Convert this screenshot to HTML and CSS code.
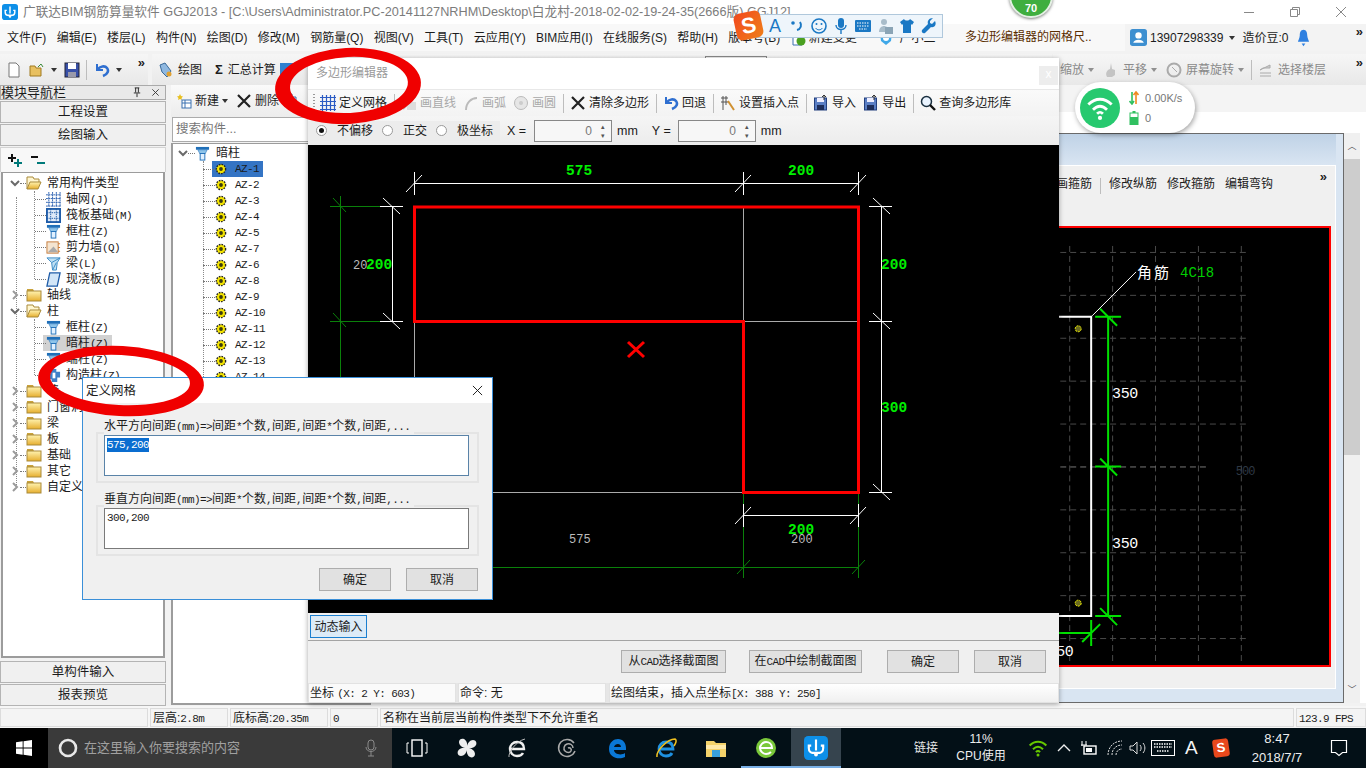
FILE: index.html
```html
<!DOCTYPE html>
<html lang="zh-CN">
<head>
<meta charset="utf-8">
<title>广联达BIM钢筋算量软件 GGJ2013</title>
<link rel="stylesheet" href="styles.css">
</head>
<body>
<svg class="defs" aria-hidden="true">
  <defs>
    <linearGradient id="fy" x1="0" y1="0" x2="0" y2="1"><stop offset="0" stop-color="#fff3b0"/><stop offset="1" stop-color="#e6ae2e"/></linearGradient>
    <symbol id="chev-r" viewBox="0 0 10 10"><path d="M3 1l4 4-4 4" fill="none" stroke="#9a9a9a" stroke-width="2"/></symbol>
    <symbol id="chev-d" viewBox="0 0 10 10"><path d="M1 3l4 4 4-4" fill="none" stroke="#6a6a6a" stroke-width="2"/></symbol>
    <symbol id="folder" viewBox="0 0 16 14"><path d="M1 3V1h6l1 2z" fill="#c9a23c"/><rect x="1" y="3" width="14" height="10" fill="url(#fy)" stroke="#a98a3a"/></symbol>
    <symbol id="folder-o" viewBox="0 0 16 14"><path d="M1 13V1h6l1 2h5v3" fill="#fff6d0" stroke="#a98a3a"/><path d="M1 13l3-7h11l-3 7z" fill="url(#fy)" stroke="#a98a3a"/></symbol>
    <symbol id="pillar" viewBox="0 0 16 16"><path d="M1 1h14v3H1z" fill="#1f6fb8"/><path d="M3 4h10l-2 4H5z" fill="#8ec4ea" stroke="#1f6fb8" stroke-width=".6"/><rect x="5.5" y="8" width="5" height="7" fill="#e0f0ff" stroke="#1f6fb8"/></symbol>
    <symbol id="gear" viewBox="0 0 12 12"><circle cx="6" cy="6" r="4.6" fill="#f6e600" stroke="#222" stroke-width="1.4" stroke-dasharray="1.6 1.1"/><circle cx="6" cy="6" r="1.9" fill="#3a3a10"/></symbol>
    <symbol id="grid" viewBox="0 0 16 16"><path d="M3 0v16M7 0v16M11 0v16M15 0v16M0 3h16M0 7h16M0 11h16M0 15h16" stroke="#2a5fb0" fill="none" stroke-dasharray="2 .6"/></symbol>
    <symbol id="raft" viewBox="0 0 16 16"><rect x="1" y="1" width="14" height="14" fill="#dfeaf8" stroke="#1f5ca8" stroke-width="2"/><path d="M5 1v14M11 1v14M1 5h14M1 11h14" stroke="#1f5ca8" stroke-dasharray="1.5 1"/></symbol>
    <symbol id="wall" viewBox="0 0 16 16"><rect x="1" y="2" width="12" height="12" fill="#f4e4d0" stroke="#c47a3a"/><path d="M2 13l6-6 5 6z" fill="#aaa"/><path d="M13 4h2M13 8h2M13 12h2" stroke="#d0762a"/></symbol>
    <symbol id="beam" viewBox="0 0 16 16"><path d="M1 2h14l-3 5-1 8H7L6 7z" fill="#bfe0f4" stroke="#3a8ac4"/><path d="M6 7l9-5M7 15l4-8" stroke="#3a8ac4" fill="none"/></symbol>
    <symbol id="slab" viewBox="0 0 16 16"><path d="M4 1h11l-3 14H1z" fill="#d2e6f8" stroke="#1f5ca8" stroke-width="1.4"/></symbol>
    <symbol id="struct" viewBox="0 0 16 16"><path d="M5 1h6v3h4v6h-3v5H6v-3H1V6h4z" fill="#3f80c8"/><path d="M7 5h3v6H7z" fill="#fff"/></symbol>
    <symbol id="dgrid" viewBox="0 0 16 16"><path d="M2.5 0v16M6.5 0v16M10.5 0v16M14.5 0v16M0 2.5h16M0 6.5h16M0 10.5h16M0 14.5h16" stroke="#2c5cc4" stroke-width="1.2" fill="none"/></symbol>
    <symbol id="undo" viewBox="0 0 16 16"><path d="M3 2v6h6" fill="none" stroke="#2f6fd0" stroke-width="2"/><path d="M3.5 7.5C6 4 11 3.500 13 6s1 6-4 8" fill="none" stroke="#2f6fd0" stroke-width="2.600"/></symbol>
    <symbol id="cross" viewBox="0 0 16 16"><path d="M2 2l12 12M14 2L2 14" stroke="#222" stroke-width="2.200"/></symbol>
    <symbol id="floppy" viewBox="0 0 16 16"><rect x="1.500" y="3" width="12" height="12" fill="#5a7ec4" stroke="#24407e"/><rect x="4" y="3" width="7" height="4" fill="#eef"/><rect x="4" y="10" width="7" height="5" fill="#1e2e5a"/><path d="M11 0v5M9 2l2-2 2 2" stroke="#333" fill="none"/></symbol>
    <symbol id="lens" viewBox="0 0 16 16"><circle cx="6.500" cy="6.500" r="5" fill="#eaf4ff" stroke="#1a3040" stroke-width="1.500"/><path d="M10 10l5 5" stroke="#111" stroke-width="2.400"/></symbol>
    <symbol id="tri" viewBox="0 0 6 4"><path d="M0 0h6L3 4z" fill="#333"/></symbol>
    <symbol id="wifi" viewBox="0 0 24 24"><path d="M2 9c6-6 14-6 20 0M6 13.500c4-4 8-4 12 0M9.500 17c2-2 3-2 5 0" fill="none" stroke="currentColor" stroke-width="2.400"/><circle cx="12" cy="20.500" r="1.800" fill="currentColor"/></symbol>
    <symbol id="app" viewBox="0 0 20 20"><rect width="20" height="20" rx="3.500" fill="#0d8fe8"/><path d="M10 3v9M6 8H4v2c0 3 2 4 3 4h6c1 0 3-1 3-4V8h-2" fill="none" stroke="#fff" stroke-width="1.800"/><circle cx="10" cy="15.500" r="1.600" fill="#fff"/></symbol>
  </defs>
</svg>

<div class="app">
  <header class="titlebar">
    <svg class="app-ico"><use href="#app"/></svg>
    <span class="title-text">广联达BIM钢筋算量软件 GGJ2013 - [C:\Users\Administrator.PC-20141127NRHM\Desktop\白龙村-2018-02-02-19-24-35(2666版).GGJ12]</span>
    <div class="winctl">
      <svg class="wc" viewBox="0 0 12 12"><path d="M1 6.500h10" stroke="#888"/></svg>
      <svg class="wc" viewBox="0 0 12 12"><path d="M1.500 3.500h7v7h-7zM3.500 3.500v-2h7v7h-2" fill="none" stroke="#888"/></svg>
      <svg class="wc" viewBox="0 0 12 12"><path d="M1 1l10 10M11 1L1 11" stroke="#888"/></svg>
    </div>
  </header>

  <nav class="menubar">
    <span>文件(F)</span><span>编辑(E)</span><span>楼层(L)</span><span>构件(N)</span><span>绘图(D)</span><span>修改(M)</span><span>钢筋量(Q)</span><span>视图(V)</span><span>工具(T)</span><span>云应用(Y)</span><span>BIM应用(I)</span><span>在线服务(S)</span><span>帮助(H)</span><span>版本号(B)</span>
    <svg class="m-ico" viewBox="0 0 16 16"><path d="M2 1h9v14H2z" fill="#fff" stroke="#3a70b0"/><circle cx="10" cy="11" r="4.500" fill="#4aa020"/></svg><span class="m-new">新建变更</span>
    <svg class="m-ico m-ico2" viewBox="0 0 16 16"><path d="M2 3h12l-1 8-5 4-5-4z" fill="#40a8e8"/><circle cx="8" cy="8" r="3" fill="#fff"/></svg><span class="m-guang">广小二</span>
    <span class="m-hint">多边形编辑器的网格尺..</span>
    <div class="userbox">
      <svg class="u-ico" viewBox="0 0 16 16"><rect width="16" height="16" rx="2.500" fill="#3d8fd0"/><circle cx="8" cy="6" r="3" fill="#fff"/><path d="M3 13c1-4 9-4 10 0z" fill="#fff"/></svg>
      <span class="u-phone">13907298339</span><svg class="tri"><use href="#tri"/></svg>
      <span class="u-bean">造价豆:0</span>
      <svg class="u-bell" viewBox="0 0 14 20"><path d="M7 1c3 0 4 3 4 6 0 3 2 6 2 7H1c0-1 2-4 2-7 0-3 1-6 4-6z" fill="#2f80e0"/><path d="M5 16h4l-2 3z" fill="#2f80e0"/></svg>
      <span class="chevs">»</span>
    </div>
  </nav>

  <div class="toolbar">
    <div class="tb-seg tb-quick">
      <svg class="ti" viewBox="0 0 16 16"><path d="M3 1h7l3 3v11H3z" fill="#fff" stroke="#777"/></svg>
      <svg class="ti" viewBox="0 0 16 16"><path d="M1 14V4h5l1 2h5v8z" fill="#e8c060" stroke="#a07a20"/><path d="M9 5l3-3 2 3" fill="none" stroke="#3a8a3a"/></svg>
      <svg class="tri"><use href="#tri"/></svg>
      <svg class="ti" viewBox="0 0 16 16"><rect x="1" y="1" width="14" height="14" fill="#3850a8" stroke="#223"/><rect x="4" y="1" width="8" height="6" fill="#fff"/><rect x="4" y="10" width="8" height="5" fill="#99a"/></svg>
      <i class="vsep"></i>
      <svg class="ti"><use href="#undo"/></svg>
      <svg class="tri"><use href="#tri"/></svg>
      <span class="chevs tb-more">»</span>
    </div>
    <div class="tb-seg tb-main">
      <svg class="ti" viewBox="0 0 16 16"><path d="M2 3l5-2 6 8-4 6-5-5z" fill="#8fb8e0" stroke="#3a6a9a"/><circle cx="11" cy="12" r="2.500" fill="#e0a030"/></svg><span>绘图</span>
      <b class="sigma">Σ</b><span>汇总计算</span>
      <svg class="ti" viewBox="0 0 16 16"><rect x="1" y="1" width="14" height="14" fill="#2f80d0"/><path d="M3 13L13 3v10z" fill="#e8f2fc"/></svg>
      <i class="tb-box"></i>
    </div>
    <div class="tb-seg tb-view">
      <span>缩放</span><svg class="tri tri-g"><use href="#tri"/></svg>
      <svg class="ti" viewBox="0 0 16 16"><path d="M4 15c-2-4 0-7 3-8l1-6 1 6 3 1v5l-3 2z" fill="#c4c4c4"/></svg><span>平移</span><svg class="tri tri-g"><use href="#tri"/></svg>
      <svg class="ti" viewBox="0 0 16 16"><circle cx="8" cy="8" r="6.500" fill="none" stroke="#aaa" stroke-width="2"/><path d="M6 5l5 5" stroke="#aaa"/></svg><span>屏幕旋转</span><svg class="tri tri-g"><use href="#tri"/></svg>
      <i class="vsep"></i>
      <svg class="ti" viewBox="0 0 16 16"><path d="M2 8l10-5v3H5zM2 11h11M2 14h11" stroke="#aaa" fill="#ccc"/></svg><span>选择楼层</span>
      <span class="chevs tb-end">»</span>
    </div>
  </div>

  <main class="body">
    <aside class="nav">
      <div class="nav-head"><span class="nav-title">模块导航栏</span><svg class="nav-pin" viewBox="0 0 10 12"><path d="M2.500 1h5M3.500 1v5M6.500 1v5M1.500 6.500h7M5 7v4" fill="none" stroke="#222"/></svg><svg class="nav-x" viewBox="0 0 10 10"><path d="M1.500 1.500l7 7M8.500 1.500l-7 7" stroke="#333"/></svg></div>
      <button class="navbtn">工程设置</button>
      <button class="navbtn">绘图输入</button>
      <div class="nav-exp">
        <svg class="ex" viewBox="0 0 16 14"><path d="M5 1v8M1 5h8" stroke="#111" stroke-width="2"/><path d="M11 6v8M7 10h8" stroke="#007a7a" stroke-width="2"/></svg>
        <svg class="ex" viewBox="0 0 16 14"><path d="M1 4h7" stroke="#111" stroke-width="2"/><path d="M7 10h8" stroke="#007a7a" stroke-width="2"/></svg>
      </div>
      <div class="treebox">
        <div class="tree">
          <div class="n0"><svg class="chv"><use href="#chev-d"/></svg><i class="dot d0"></i><svg class="fo"><use href="#folder-o"/></svg><span>常用构件类型</span></div>
          <div class="kids">
            <div class="n1"><i class="dot"></i><svg class="ic"><use href="#grid"/></svg><span>轴网<span class="sim">(J)</span></span></div>
            <div class="n1"><i class="dot"></i><svg class="ic"><use href="#raft"/></svg><span>筏板基础<span class="sim">(M)</span></span></div>
            <div class="n1"><i class="dot"></i><svg class="ic"><use href="#pillar"/></svg><span>框柱<span class="sim">(Z)</span></span></div>
            <div class="n1"><i class="dot"></i><svg class="ic"><use href="#wall"/></svg><span>剪力墙<span class="sim">(Q)</span></span></div>
            <div class="n1"><i class="dot"></i><svg class="ic"><use href="#beam"/></svg><span>梁<span class="sim">(L)</span></span></div>
            <div class="n1"><i class="dot"></i><svg class="ic"><use href="#slab"/></svg><span>现浇板<span class="sim">(B)</span></span></div>
          </div>
          <div class="n0"><svg class="chv"><use href="#chev-r"/></svg><i class="dot d0"></i><svg class="fo"><use href="#folder"/></svg><span>轴线</span></div>
          <div class="n0"><svg class="chv"><use href="#chev-d"/></svg><i class="dot d0"></i><svg class="fo"><use href="#folder-o"/></svg><span>柱</span></div>
          <div class="kids kids-s">
            <div class="n1"><i class="dot"></i><svg class="ic"><use href="#pillar"/></svg><span>框柱<span class="sim">(Z)</span></span></div>
            <div class="n1 hl"><i class="dot"></i><svg class="ic"><use href="#pillar"/></svg><span>暗柱<span class="sim">(Z)</span></span></div>
            <div class="n1"><i class="dot"></i><svg class="ic"><use href="#pillar"/></svg><span>端柱<span class="sim">(Z)</span></span></div>
            <div class="n1"><i class="dot"></i><svg class="ic"><use href="#struct"/></svg><span>构造柱<span class="sim">(Z)</span></span></div>
          </div>
          <div class="n0"><svg class="chv"><use href="#chev-r"/></svg><i class="dot d0"></i><svg class="fo"><use href="#folder"/></svg><span>墙</span></div>
          <div class="n0"><svg class="chv"><use href="#chev-r"/></svg><i class="dot d0"></i><svg class="fo"><use href="#folder"/></svg><span>门窗洞</span></div>
          <div class="n0"><svg class="chv"><use href="#chev-r"/></svg><i class="dot d0"></i><svg class="fo"><use href="#folder"/></svg><span>梁</span></div>
          <div class="n0"><svg class="chv"><use href="#chev-r"/></svg><i class="dot d0"></i><svg class="fo"><use href="#folder"/></svg><span>板</span></div>
          <div class="n0"><svg class="chv"><use href="#chev-r"/></svg><i class="dot d0"></i><svg class="fo"><use href="#folder"/></svg><span>基础</span></div>
          <div class="n0"><svg class="chv"><use href="#chev-r"/></svg><i class="dot d0"></i><svg class="fo"><use href="#folder"/></svg><span>其它</span></div>
          <div class="n0"><svg class="chv"><use href="#chev-r"/></svg><i class="dot d0"></i><svg class="fo"><use href="#folder"/></svg><span>自定义</span></div>
        </div>
      </div>
      <button class="navbtn">单构件输入</button>
      <button class="navbtn">报表预览</button>
    </aside>

    <section class="mid">
      <div class="mid-tb">
        <svg class="ti" viewBox="0 0 16 16"><path d="M4 1l1 2 2 .5-1.500 1.500.5 2L4 6 2 7l.5-2L1 3.500 3 3z" fill="#e8c020"/><rect x="6" y="7" width="9" height="8" fill="#fff" stroke="#3a70b0"/><path d="M6 10h9M9 7v8" stroke="#3a70b0"/></svg><span>新建</span><svg class="tri"><use href="#tri"/></svg>
        <svg class="ti ml"><use href="#cross"/></svg><span>删除</span>
        <svg class="ti" viewBox="0 0 16 16"><path d="M2 1h8v12H2z" fill="#fff" stroke="#3a70b0"/><path d="M6 4h8v11H6z" fill="#dce8f8" stroke="#3a70b0"/></svg>
      </div>
      <div class="search">搜索构件...</div>
      <div class="midtree">
        <div class="m0"><svg class="chv"><use href="#chev-d"/></svg><i class="dot d0"></i><svg class="ic"><use href="#pillar"/></svg><span>暗柱</span></div>
        <div class="m1 sel"><i class="dot"></i><svg class="gr"><use href="#gear"/></svg><span class="az">AZ-1</span></div>
        <div class="m1"><i class="dot"></i><svg class="gr"><use href="#gear"/></svg><span class="az">AZ-2</span></div>
        <div class="m1"><i class="dot"></i><svg class="gr"><use href="#gear"/></svg><span class="az">AZ-3</span></div>
        <div class="m1"><i class="dot"></i><svg class="gr"><use href="#gear"/></svg><span class="az">AZ-4</span></div>
        <div class="m1"><i class="dot"></i><svg class="gr"><use href="#gear"/></svg><span class="az">AZ-5</span></div>
        <div class="m1"><i class="dot"></i><svg class="gr"><use href="#gear"/></svg><span class="az">AZ-7</span></div>
        <div class="m1"><i class="dot"></i><svg class="gr"><use href="#gear"/></svg><span class="az">AZ-6</span></div>
        <div class="m1"><i class="dot"></i><svg class="gr"><use href="#gear"/></svg><span class="az">AZ-8</span></div>
        <div class="m1"><i class="dot"></i><svg class="gr"><use href="#gear"/></svg><span class="az">AZ-9</span></div>
        <div class="m1"><i class="dot"></i><svg class="gr"><use href="#gear"/></svg><span class="az">AZ-10</span></div>
        <div class="m1"><i class="dot"></i><svg class="gr"><use href="#gear"/></svg><span class="az">AZ-11</span></div>
        <div class="m1"><i class="dot"></i><svg class="gr"><use href="#gear"/></svg><span class="az">AZ-12</span></div>
        <div class="m1"><i class="dot"></i><svg class="gr"><use href="#gear"/></svg><span class="az">AZ-13</span></div>
        <div class="m1"><i class="dot"></i><svg class="gr"><use href="#gear"/></svg><span class="az">AZ-14</span></div>
      </div>
    </section>

    <section class="work">
      <div class="work-top"></div>
      <div class="work-main">
        <div class="sub">
          <div class="sub-head"></div>
          <div class="sub-inner">
            <div class="sub-tb">
              <span>画箍筋</span><i class="vsep"></i><span>修改纵筋</span><span>修改箍筋</span><span>编辑弯钩</span><span class="chevs sub-more">»</span>
            </div>
            <svg class="sub-cv" viewBox="1000 228 329 438">
              <g class="dash">
                <path d="M1069.500 246v416M1112.500 246v416M1155.500 246v416M1198.500 246v416M1241.500 246v416"/>
                <path d="M1000 252.500h248M1000 295.500h248M1000 338.500h248M1000 381.500h248M1000 424.500h248M1000 510.500h248M1000 553.500h248M1000 596.500h248M1000 639.500h248"/>
                <path class="dash-b" d="M1000 467.500h210"/>
              </g>
              <path d="M1000 317H1091V617H1000" fill="none" stroke="#fff" stroke-width="2"/>
              <path d="M1092 316L1136 272" stroke="#fff"/>
              <g stroke="#00e000" stroke-width="2" fill="none">
                <path d="M1108 317v300M1095 317h26M1095 467h26M1095 617h26M1100 309l17 17M1100 459l17 17M1100 609l17 17"/>
                <path d="M1000 634h91M1091 621v26M1082 643l18-18"/>
              </g>
              <circle class="rebar" cx="1078" cy="329" r="3"/>
              <circle class="rebar" cx="1078" cy="604" r="3"/>
              <text class="cad-w cad-cn" x="1137" y="278">角筋</text>
              <text class="cad-g" x="1180" y="277">4C18</text>
              <text class="cad-w" x="1112" y="398">350</text>
              <text class="cad-w" x="1112" y="549">350</text>
              <text class="cad-w" x="1056" y="657">50</text>
              <text class="cad-d" x="1236" y="476">500</text>
            </svg>
            <div class="sub-foot"></div>
          </div>
        </div>
        <div class="vscroll"><span class="sb-btn">︿</span><div class="sb-thumb"></div><span class="sb-btn sb-down">﹀</span></div>
      </div>
    </section>
  </main>

  <footer class="status">
    <div class="cell c0"></div>
    <div class="cell c1">层高:<span class="sim">2.8m</span></div>
    <div class="cell c2">底标高:<span class="sim">20.35m</span></div>
    <div class="cell c3"><span class="sim">0</span></div>
    <div class="cell c4">名称在当前层当前构件类型下不允许重名</div>
    <div class="cell c5"><span class="sim">123.9 FPS</span></div>
  </footer>

  <div class="taskbar">
    <div class="start"><svg class="win" viewBox="0 0 18 18"><path d="M0 2.500l7.500-1v7H0zM8.500 1.400L18 0v8.500H8.500zM0 9.500h7.500v7l-7.500-1zM8.500 9.500H18V18l-9.500-1.400z" fill="#fff"/></svg></div>
    <div class="tsearch">
      <svg class="cort" viewBox="0 0 20 20"><circle cx="10" cy="10" r="8" fill="none" stroke="#e8e8e8" stroke-width="2.600"/></svg>
      <span>在这里输入你要搜索的内容</span>
      <svg class="tmic" viewBox="0 0 12 18"><rect x="3" y="1" width="6" height="10" rx="3" fill="none" stroke="#8a8a8a"/><path d="M1 8c0 6 10 6 10 0M6 13v4M3 17h6" fill="none" stroke="#8a8a8a"/></svg>
    </div>
    <div class="tapps">
      <div class="tapp"><svg class="ta" viewBox="0 0 22 22"><rect x="6" y="3" width="10" height="16" fill="none" stroke="#fff" stroke-width="1.400"/><path d="M3 6H1v10h2M19 6h2v10h-2" fill="none" stroke="#fff"/></svg></div>
      <div class="tapp"><svg class="ta" viewBox="0 0 22 22"><path d="M11 11C6 11 3 8 3 5s3-4 5-3 4 4 3 9zM11 11c0-5 3-8 6-8s4 3 3 5-4 4-9 3zM11 11c5 0 8 3 8 6s-3 4-5 3-4-4-3-9zM11 11c0 5-3 8-6 8s-4-3-3-5 4-4 9-3z" fill="#eee"/></svg></div>
      <div class="tapp"><svg class="ta" viewBox="0 0 22 22"><path d="M4 12h14c0-5-3-7-7-7s-7 3-7 7 3 7 7 7c3 0 5-1 6-3" fill="none" stroke="#f0f0f0" stroke-width="2.400"/><path d="M3 20C2 16 10 4 19 2" fill="none" stroke="#bbb"/></svg></div>
      <div class="tapp"><svg class="ta" viewBox="0 0 22 22"><path d="M18 6a8.500 8.500 0 1 0 1 8M17 11c0-3-3-5-6-4s-4 5-2 7 5 2 6 0-1-4-3-3" fill="none" stroke="#aaa" stroke-width="1.500"/></svg></div>
      <div class="tapp"><svg class="ta" viewBox="0 0 22 22"><path d="M3 12C3 5 8 2 12 2c5 0 8 4 8 9v2H8c0 4 7 6 11 3v4c-6 3-16 1-16-8zm5-2h7c0-4-6-4-7 0z" fill="#0a78d7"/></svg></div>
      <div class="tapp"><svg class="ta" viewBox="0 0 22 22"><path d="M4 12h14c0-5-3-7-7-7s-7 3-7 7 3 7 7 7c3 0 5-1 6-3" fill="none" stroke="#1e90e0" stroke-width="2.800"/><path d="M2 20C1 14 12 2 20 2c2 1 1 4-1 7" fill="none" stroke="#f0c020" stroke-width="1.500"/></svg></div>
      <div class="tapp"><svg class="ta" viewBox="0 0 22 22"><path d="M1 4h8l2 2h10v14H1z" fill="#f4d26a"/><rect x="1" y="8" width="20" height="4" fill="#ffe9a8"/><rect x="7" y="13" width="8" height="7" fill="#39a0dc"/></svg></div>
      <div class="tapp under-a"><svg class="ta" viewBox="0 0 22 22"><circle cx="11" cy="11" r="10" fill="#7ac83a"/><path d="M5 11h12c0-4-3-6-6-6s-6 3-6 6 3 6 6 6c2 0 4-1 5-2" fill="none" stroke="#fff" stroke-width="2"/></svg></div>
      <div class="tapp tapp-on"><svg class="tb"><use href="#app"/></svg></div>
    </div>
    <div class="tray">
      <span class="tr-link">链接</span>
      <div class="tr-cpu"><span>11%</span><span>CPU使用</span></div>
      <svg class="tr-i tr-wifi"><use href="#wifi"/></svg>
      <svg class="tr-i tr-up" viewBox="0 0 16 16"><path d="M2 11l6-6 6 6" fill="none" stroke="#eee" stroke-width="1.400"/></svg>
      <svg class="tr-i tr-plug" viewBox="0 0 18 16"><rect x="4" y="6" width="12" height="8" fill="none" stroke="#fff" stroke-width="1.400"/><rect x="6" y="8" width="6" height="4" fill="#fff"/><path d="M2 1v5M6 1v4M1 5h6" stroke="#fff"/></svg>
      <svg class="tr-i tr-net" viewBox="0 0 18 18"><path d="M2 16C2 8 8 2 16 2M6 16c0-6 4-10 10-10M10 16c0-3 2-6 6-6" fill="none" stroke="#ddd" stroke-dasharray="2 1"/></svg>
      <svg class="tr-i tr-vol" viewBox="0 0 18 18"><path d="M2 7h3l4-4v12l-4-4H2zM12 6c1.500 2 1.500 4 0 6M15 4c2.500 3 2.500 7 0 10" fill="none" stroke="#ddd"/></svg>
      <svg class="tr-k" viewBox="0 0 24 16"><rect x=".5" y=".5" width="23" height="15" fill="none" stroke="#fff"/><path d="M3 4h18M3 7h18M6 11h12" stroke="#fff" stroke-width="1.400" stroke-dasharray="1.500 1"/></svg>
      <span class="tr-a">A</span>
      <span class="tr-s">S</span>
      <div class="tr-clock"><span>8:47</span><span>2018/7/7</span></div>
      <svg class="tr-msg" viewBox="0 0 18 18"><path d="M1.500 1.500h15v12h-4l-3.500 3-3.500-3h-4z" fill="none" stroke="#fff" stroke-width="1.200"/></svg>
    </div>
  </div>

  <!-- floating windows -->
  <section class="poly">
    <div class="poly-title"><span>多边形编辑器</span><span class="poly-x">x</span></div>
    <div class="poly-tb">
      <i class="grip"></i>
      <svg class="ti"><use href="#dgrid"/></svg><span class="pt">定义网格</span><i class="vsep"></i>
      <svg class="ti" viewBox="0 0 16 16"><path d="M2 14L14 2" stroke="#bbb" stroke-width="2"/><rect x="6" y="7" width="9" height="8" fill="#ddd"/></svg><span class="pt off">画直线</span>
      <svg class="ti" viewBox="0 0 16 16"><path d="M3 15C3 8 8 3 14 3" fill="none" stroke="#bbb" stroke-width="2"/></svg><span class="pt off">画弧</span>
      <svg class="ti" viewBox="0 0 16 16"><circle cx="8" cy="8" r="6.500" fill="#e6e6e6" stroke="#bbb"/><circle cx="8" cy="8" r="2" fill="#ccc"/></svg><span class="pt off">画圆</span><i class="vsep"></i>
      <svg class="ti"><use href="#cross"/></svg><span class="pt">清除多边形</span><i class="vsep"></i>
      <svg class="ti"><use href="#undo"/></svg><span class="pt">回退</span><i class="vsep"></i>
      <svg class="ti" viewBox="0 0 16 16"><path d="M3 1v14M1 3h7M1 7h7M6 1v9" stroke="#555" fill="none"/><path d="M8 6l6 9" stroke="#d09030" stroke-width="2"/></svg><span class="pt">设置插入点</span><i class="vsep"></i>
      <svg class="ti"><use href="#floppy"/></svg><span class="pt">导入</span>
      <svg class="ti"><use href="#floppy"/></svg><span class="pt">导出</span><i class="vsep"></i>
      <svg class="ti"><use href="#lens"/></svg><span class="pt">查询多边形库</span>
    </div>
    <div class="poly-row">
      <div class="radios">
        <i class="radio on"></i><span class="rl">不偏移</span>
        <i class="radio"></i><span class="rl">正交</span>
        <i class="radio"></i><span class="rl">极坐标</span>
      </div>
      <span class="xl">X =</span>
      <div class="spin"><span>0</span><div class="arrows"><span>▴</span><span>▾</span></div></div>
      <span class="mm">mm</span>
      <span class="yl">Y =</span>
      <div class="spin"><span>0</span><div class="arrows"><span>▴</span><span>▾</span></div></div>
      <span class="mm">mm</span>
    </div>
    <svg class="poly-cv" viewBox="308 145 751 468">
      <path class="g-lines" d="M340.500 196V580M330 206.500h50M330 321.500h50M333 198l13 14M333 313l13 14M340.500 567.500H858M743.500 493v85M858.500 493v85M737 574l13-14M852 574l13-14M414.500 321v8"/>
      <path class="s-lines" d="M743.500 207V321M744 321.500H858M414.500 322V500M414 492.500H743"/>
      <path class="w-lines" d="M414 183.500H858M414.500 172v23M743.500 172v23M858.500 172v23M406 192l16-17M735 192l16-17M850 192l16-17M392.500 206V322M380 206.500h23M380 321.500h23M383 198l17 16M383 313l17 16M881.500 206V492M869 206.500h23M869 321.500h23M869 492.500h23M873 198l17 16M873 313l17 16M873 484l17 16M743 515.500H858M743.500 504v23M858.500 504v23M735 524l16-17M850 524l16-17"/>
      <path class="r-poly" d="M414.500 207H858.500V492.500H743.500V321.500H414.500Z"/>
      <path class="r-x" d="M628 342l16 15M644 342l-16 15"/>
      <text class="t-dim" x="353" y="269">20</text>
      <text class="t-gr" x="366" y="269">200</text>
      <text class="t-gr" x="566" y="175">575</text>
      <text class="t-gr" x="788" y="175">200</text>
      <text class="t-gr" x="881" y="269">200</text>
      <text class="t-gr" x="881" y="412">300</text>
      <text class="t-dim" x="569" y="543">575</text>
      <text class="t-dim" x="791" y="543">200</text>
      <text class="t-gr" x="788" y="534">200</text>
    </svg>
    <div class="poly-dyn"><button class="dyn">动态输入</button></div>
    <div class="poly-btns">
      <button class="btn b-cad1">从<span class="sim">CAD</span>选择截面图</button>
      <button class="btn b-cad2">在<span class="sim">CAD</span>中绘制截面图</button>
      <button class="btn b-ok">确定</button>
      <button class="btn b-cc">取消</button>
    </div>
    <div class="poly-status">
      <div class="ps ps1">坐标 <span class="sim">(X: 2 Y: 603)</span></div>
      <div class="ps ps2">命令: 无</div>
      <div class="ps ps3">绘图结束，插入点坐标<span class="sim">[X: 388 Y: 250]</span></div>
    </div>
  </section>

  <section class="dlg">
    <div class="dlg-title"><span>定义网格</span><svg class="dlg-x" viewBox="0 0 12 12"><path d="M1 1l10 10M11 1L1 11" stroke="#111"/></svg></div>
    <div class="dlg-body">
      <fieldset class="fs">
        <legend>水平方向间距<span class="sim">(mm)=&gt;</span>间距<span class="sim">*</span>个数<span class="sim">,</span>间距<span class="sim">,</span>间距<span class="sim">*</span>个数<span class="sim">,</span>间距<span class="sim">,...</span></legend>
        <div class="ta-box focus"><span class="sim seltext">575,200</span></div>
      </fieldset>
      <fieldset class="fs">
        <legend>垂直方向间距<span class="sim">(mm)=&gt;</span>间距<span class="sim">*</span>个数<span class="sim">,</span>间距<span class="sim">,</span>间距<span class="sim">*</span>个数<span class="sim">,</span>间距<span class="sim">,...</span></legend>
        <div class="ta-box"><span class="sim">300,200</span></div>
      </fieldset>
      <div class="dlg-btns"><button class="btn d-btn">确定</button><button class="btn d-btn">取消</button></div>
    </div>
  </section>

  <div class="sogou">
    <span class="sg-s">S</span>
    <span class="sg-a">A</span>
    <svg class="sg" viewBox="0 0 16 16"><circle cx="4" cy="5" r="1.800" fill="#1a78c4"/><path d="M11 4c2 3 1 7-3 8" fill="none" stroke="#1a78c4" stroke-width="2"/></svg>
    <svg class="sg" viewBox="0 0 16 16"><circle cx="8" cy="8" r="7" fill="none" stroke="#1a78c4" stroke-width="1.600"/><circle cx="5.500" cy="6" r="1" fill="#1a78c4"/><circle cx="10.500" cy="6" r="1" fill="#1a78c4"/><path d="M4.500 10c2 2.500 5 2.500 7 0" fill="none" stroke="#1a78c4"/></svg>
    <svg class="sg" viewBox="0 0 16 16"><rect x="5" y="0" width="6" height="10" rx="3" fill="#1a78c4"/><path d="M3 7c0 6 10 6 10 0M8 12v4" fill="none" stroke="#1a78c4" stroke-width="1.400"/></svg>
    <svg class="sg" viewBox="0 0 16 16"><rect y="2" width="16" height="12" rx="1" fill="#1a78c4"/><path d="M2 5h12M2 8h12M4 11h8" stroke="#fff" stroke-dasharray="1.500 1"/></svg>
    <svg class="sg" viewBox="0 0 16 16"><circle cx="7" cy="4" r="3" fill="#a8bcca"/><path d="M2 14c0-8 10-8 10 0z" fill="#a8bcca"/><rect x="8" y="9" width="8" height="7" fill="#8aa4b6"/></svg>
    <svg class="sg" viewBox="0 0 16 16"><path d="M5 1L1 4l2 3 1-1v9h8V6l1 1 2-3-4-3c-1 2-5 2-6 0z" fill="#1a78c4"/></svg>
    <svg class="sg" viewBox="0 0 16 16"><path d="M14 3l-3 3-2-1 0-2 3-3C8 0 6 3 7 6L1 12c-1 2 1 4 3 3l6-6c3 1 6-2 4-6z" fill="#1a78c4"/></svg>
  </div>

  <div class="badge70"><span>70</span></div>

  <div class="netw">
    <div class="netw-c"><svg class="netw-w"><use href="#wifi"/></svg></div>
    <div class="netw-t">
      <div class="netw-r"><svg class="netw-i" viewBox="0 0 10 14"><path d="M3 1v12M0.500 10L3 13l2-3" fill="none" stroke="#30c060" stroke-width="1.600"/><path d="M7 13V1M4.500 4L7 1l2.500 3" fill="none" stroke="#f08a20" stroke-width="1.600"/></svg><span>0.00K/s</span></div>
      <div class="netw-r"><svg class="netw-i" viewBox="0 0 10 14"><rect x="3.500" y="0" width="3" height="2" fill="#30c060"/><rect x="1" y="2" width="8" height="12" fill="none" stroke="#30c060"/><rect x="1" y="6" width="8" height="8" fill="#30c060"/></svg><span>0</span></div>
    </div>
  </div>

  <svg class="ink" viewBox="0 0 1366 768" aria-hidden="true">
    <path transform="rotate(-3 348 86)" fill-rule="evenodd" fill="#f00000" d="M275 86a73 38 0 1 0 146 0a73 38 0 1 0-146 0zM290 85a59 28 0 1 0 118 0a59 28 0 1 0-118 0z"/>
    <path transform="rotate(3 120 381)" fill-rule="evenodd" fill="#f00000" d="M38 381a83 35 0 1 0 166 0a83 35 0 1 0-166 0zM50 380a70 25 0 1 0 140 0a70 25 0 1 0-140 0z"/>
  </svg>
</div>
</body>
</html>
```
FILE: styles.css
```css
* { box-sizing: border-box; }
html, body { margin: 0; padding: 0; }
body { width: 1366px; height: 768px; overflow: hidden; background: #f0f0f0; }
.defs { position: absolute; width: 0; height: 0; }
svg { display: block; flex: none; }
i { display: block; flex: none; }
button { font: inherit; color: inherit; padding: 0; margin: 0; }

.app {
  position: relative; width: 1366px; height: 768px; display: flex; flex-direction: column; overflow: hidden;
  font: 12px/16px "Liberation Sans", "Noto Sans CJK SC", sans-serif; color: #1c1c1c; background: #f2f2f2;
}
.sim { font-family: "Liberation Mono", "Noto Sans CJK SC", monospace; font-size: 11px; letter-spacing: -.6px; }

/* title */
.titlebar { height: 24px; flex: none; display: flex; align-items: center; background: #fff; padding-left: 2px; }
.app-ico { width: 16px; height: 16px; }
.title-text { margin-left: 5px; font-size: 12.700px; color: #7c7c7c; white-space: nowrap; flex: none; width: 1060px; overflow: hidden; }
.winctl { margin-left: auto; display: flex; gap: 34px; padding-right: 19px; }
.wc { width: 12px; height: 12px; }

/* menu */
.menubar { height: 27px; flex: none; display: flex; align-items: center; gap: 10.300px; padding-left: 7px; background: #f8f8f8; white-space: nowrap; position: relative; }
.m-ico { width: 16px; height: 16px; }
.m-new { margin-left: -8px; }
.m-ico2 { margin-left: 11px; }
.m-guang { margin-left: -5px; }
.m-hint { position: absolute; left: 965px; color: #5a2d00; top: 5px; }
.userbox { position: absolute; left: 1125px; top: 0; right: 0; height: 27px; background: #f3f3f3; display: flex; align-items: center; padding-left: 5px; gap: 0; }
.u-ico { width: 17px; height: 19px; }
.u-phone { margin-left: 3px; }
.tri { width: 6px; height: 4px; }
.userbox .tri { margin-left: 6px; }
.u-bean { margin-left: 7px; }
.u-bell { width: 13px; height: 20px; margin-left: 9px; }
.chevs { font-weight: 700; font-size: 13px; color: #222; }
.userbox .chevs { position: absolute; right: 3px; top: 0; }

/* toolbar */
.toolbar { height: 31px; margin-top: 3px; flex: none; display: flex; gap: 4px; }
.tb-seg { display: flex; align-items: center; background: linear-gradient(#f6f6f6, #e8e8e8); position: relative; }
.tb-quick { width: 148px; padding-left: 5px; gap: 6px; }
.tb-quick .ti { margin-left: 1px; }
.tb-more { position: absolute; right: 3px; top: 1px; }
.ti { width: 16px; height: 16px; }
.vsep { width: 1px; height: 20px; background: #bdbdbd; }
.tb-main { width: 900px; padding-left: 6px; gap: 3px; }
.sigma { margin-left: 10px; font-size: 13px; margin-right: 2px; }
.tb-main .ti { margin-right: 1px; }
.tb-box { position: absolute; left: 553px; top: 2px; width: 62px; height: 5px; border: 1px solid #8a8a8a; border-bottom: 0; }
.tb-view { flex: 1; padding-left: 7px; gap: 4px; color: #8a8a8a; position: absolute; left: 1053px; right: 0; height: 31px; }
.tb-view .tri-g { margin-right: 3px; opacity: .5; }
.tb-view .ti { margin-left: 2px; }
.tb-end { position: absolute; right: 3px; top: 1px; }

/* body */
.body { flex: 1; min-height: 0; display: flex; }
.nav { width: 167px; flex: none; display: flex; flex-direction: column; }
.nav-head { height: 15px; display: flex; align-items: center; background: #e9e9e9; border: 1px solid #aaa; margin-right: 1px; }
.nav-title { flex: 1; font-size: 13px; line-height: 12px; }
.nav-pin { width: 10px; height: 11px; margin-right: 9px; }
.nav-x { width: 9px; height: 9px; margin-right: 5px; }
.navbtn { height: 22px; flex: none; background: #f0f0f0; border: 1px solid #b4b4b4; margin: 1px 1px 0 0; text-align: center; line-height: 20px; font-size: 12.500px; }
.nav-exp { height: 25px; flex: none; display: flex; align-items: flex-end; gap: 7px; padding: 0 0 5px 6px; border: 1px solid #d4d4d4; border-bottom: 0; margin-right: 1px; background: #f8f8f8; margin-top: 1px; }
.ex { width: 16px; height: 14px; }
.treebox { flex: 1; min-height: 0; background: #fff; border: 1px solid #9c9c9c; border-width: 1px 2px 2px 2px; margin: 0 2px 2px 1px; }
.tree { padding-top: 2px; position: relative; }
.tree::before { content: ""; position: absolute; left: 13px; top: 24px; height: 290px; border-left: 1px dotted #8a8a8a; }
.n0, .n1, .m0, .m1 { height: 16px; display: flex; align-items: center; white-space: nowrap; position: relative; }
.n0 { padding-left: 7px; }
.chv { width: 10px; height: 10px; }
.dot { width: 11px; border-top: 1px dotted #777; }
.d0 { width: 6px; }
.fo { width: 16px; height: 14px; margin-right: 5px; }
.kids { position: relative; }
.kids::before { content: ""; position: absolute; left: 31px; top: 0; height: 88px; border-left: 1px dotted #8a8a8a; }
.kids-s::before { height: 56px; }
.n1 { padding-left: 32px; }
.ic { width: 15px; height: 15px; margin-right: 5px; }
.n1.hl { background: linear-gradient(#d2d2d2, #d2d2d2) no-repeat 40px 0 / 69px 16px; }

.mid { width: 200px; flex: none; margin-left: 4px; display: flex; flex-direction: column; margin-bottom: 1px; }
.mid-tb { height: 32px; flex: none; display: flex; align-items: center; gap: 3px; padding-left: 5px; background: linear-gradient(#fafafa, #ececec); white-space: nowrap; }
.ml { margin-left: 5px; }
.search { height: 25px; flex: none; margin: 0 0 1px 1px; border: 1px solid #ababab; background: #fff; color: #777; padding-left: 3px; line-height: 22px; font-size: 12.500px; }
.midtree { flex: 1; min-height: 0; background: #fff; border: 1px solid #9c9c9c; border-width: 1px 0 2px 2px; padding-top: 1px; position: relative; }
.midtree::before { content: ""; position: absolute; left: 30px; top: 17px; height: 222px; border-left: 1px dotted #8a8a8a; }
.m0 { padding-left: 5px; }
.m0 .d0 { width: 7px; }
.m0 .ic { margin-right: 6px; }
.m1 { padding-left: 30px; }
.m1 .dot { width: 12px; }
.gr { width: 12px; height: 12px; margin-right: 8px; }
.az { font-family: "Liberation Mono", monospace; font-size: 11px; letter-spacing: -.6px; }
.m1.sel { background: linear-gradient(#3474c4, #3474c4) no-repeat 39px 0 / 51px 16px; }

.work { flex: 1; min-width: 0; display: flex; flex-direction: column; margin-bottom: 3px; }
.work-top { height: 48px; flex: none; background: linear-gradient(#f4f4f4 56%, #fff 56%); }
.work-main { flex: 1; min-height: 0; display: flex; background: #fff; padding-right: 6px; }
.sub { flex: 1; min-width: 0; display: flex; flex-direction: column; border: 1px solid #6a6a6a; border-width: 1px 1px 1px 0; background: #d9e5f2; padding-right: 7px; }
.sub-head { height: 31px; flex: none; background: linear-gradient(#bfd2e6, #d9e5f2); }
.sub-inner { flex: 1; min-height: 0; display: flex; flex-direction: column; background: #f0f0f0; border: 1px solid #fff; border-width: 1px 1px 1px 0; margin-bottom: 13px; }
.sub-tb { height: 60px; flex: none; display: flex; gap: 10px; padding-top: 10px; justify-content: flex-end; padding-right: 62px; position: relative; white-space: nowrap; background: #f0f0f0; }
.sub-tb .vsep { height: 16px; margin: 2px -2px 0; }
.sub-more { position: absolute; right: 8px; top: 3px; }
.sub-cv { width: 331px; height: 441px; align-self: flex-end; background: #000; border: solid #f00; border-width: 2px 2px 2px 0; margin-right: 4px; }
.sub-foot { flex: 1; }
.dash path { fill: none; stroke: #4a4a4a; stroke-dasharray: 6 4; }
.dash path.dash-b { stroke: #777; }
.rebar { fill: #6a6a20; stroke: #f0f000; stroke-dasharray: 2 1; }
.cad-w { font: 15px "Liberation Mono", "Noto Sans CJK SC", monospace; fill: #fff; letter-spacing: -.4px; }
.cad-cn { letter-spacing: 2px; }
.cad-g { font: 14px "Liberation Mono", monospace; fill: #00d000; letter-spacing: .2px; }
.cad-d { font: 12px "Liberation Mono", monospace; fill: #2e3844; letter-spacing: -1px; }
.vscroll { width: 16px; flex: none; background: #f0f0f0; display: flex; flex-direction: column; align-items: stretch; }
.sb-btn { height: 26px; text-align: center; font-size: 9px; line-height: 26px; color: #555; }
.sb-thumb { height: 296px; background: #cdcdcd; }
.sb-down { margin-top: auto; }

/* status */
.status { height: 22px; flex: none; display: flex; gap: 2px; padding-top: 2px; background: #f6f6f6; }
.cell { height: 19px; line-height: 18px; border: 1px solid #dcdcdc; padding-left: 2px; white-space: nowrap; flex: none; background: #f4f4f4; }
.c0 { width: 148px; } .c1 { width: 78px; } .c2 { width: 98px; } .c3 { width: 48px; } .c4 { width: 914px; } .c5 { flex: 1; }

/* taskbar */
.taskbar { height: 40px; flex: none; display: flex; background: #031017; color: #fff; }
.start { width: 48px; flex: none; background: #000; display: flex; align-items: center; justify-content: center; }
.win { width: 16px; height: 16px; }
.tsearch { width: 344px; flex: none; background: #3a3a3a; display: flex; align-items: center; padding-left: 10px; color: #a0a0a0; font-size: 13px; }
.cort { width: 20px; height: 20px; margin-right: 6px; }
.tmic { width: 12px; height: 18px; margin-left: auto; margin-right: 15px; }
.tapps { display: flex; flex: none; width: 449px; }
.tapp { width: 49.900px; height: 40px; flex: none; display: flex; align-items: center; justify-content: center; }
.ta { width: 22px; height: 22px; }
.tb { width: 24px; height: 24px; }
.under-a { box-shadow: inset 0 -2px 0 #7ab0e6; }
.tapp-on { background: #36444e; box-shadow: inset 0 -2px 0 #7ab0e6; }
.tray { flex: 1; display: flex; align-items: center; position: relative; }
.tr-link { margin-left: 73px; color: #e8e8e8; }
.tr-cpu { margin-left: 19px; width: 48px; display: flex; flex-direction: column; align-items: center; font-size: 12px; line-height: 17px; white-space: nowrap; color: #eee; }
.tr-i { width: 18px; height: 18px; }
.tr-wifi { margin-left: 23px; width: 20px; height: 20px; color: #66c800; }
.tr-up { margin-left: 8px; width: 16px; height: 16px; }
.tr-plug { margin-left: 8px; }
.tr-net { margin-left: 8px; }
.tr-vol { margin-left: 4px; }
.tr-k { width: 24px; height: 16px; margin-left: 5px; }
.tr-a { margin-left: 10px; font-size: 19px; line-height: 22px; width: 16px; color: #f4f4f4; }
.tr-s { margin-left: 12px; width: 16px; height: 18px; border-radius: 3px; background: #e8481c; color: #fff; font-weight: 700; font-size: 13px; line-height: 18px; text-align: center; transform: rotate(-8deg); }
.tr-clock { margin-left: 13px; width: 70px; display: flex; flex-direction: column; align-items: center; line-height: 19px; font-size: 13px; color: #eee; }
.tr-msg { margin-left: 18px; width: 18px; height: 18px; }

/* polygon editor window */
.poly { position: absolute; left: 308px; top: 58px; width: 751px; height: 645px; display: flex; flex-direction: column; background: #f0f0f0; box-shadow: 0 1px 5px rgba(0,0,0,.35); }
.poly-title { height: 31px; flex: none; background: #fff; color: #9a9a9a; padding: 7px 0 0 8px; position: relative; }
.poly-x { position: absolute; right: 1px; top: 8px; width: 19px; height: 19px; background: #ededed; color: #fff; text-align: center; line-height: 17px; }
.poly-tb { height: 27px; flex: none; display: flex; align-items: center; background: linear-gradient(#fafafa, #f3f3f3); padding-left: 5px; white-space: nowrap; border-top: 1px solid #e8e8e8; }
.grip { width: 2px; height: 18px; margin-right: 5px; background: repeating-linear-gradient(#999 0 1px, transparent 1px 3px); }
.poly-tb .ti { margin-right: 3px; }
.pt { margin-right: 7px; }
.pt.off { color: #a8a8a8; }
.poly-tb .vsep { height: 19px; margin-right: 6px; }
.poly-row { height: 29px; flex: none; display: flex; align-items: center; background: linear-gradient(#f5f5f5, #ececec); white-space: nowrap; }
.radios { width: 192px; height: 20px; display: flex; align-items: center; padding-left: 8px; background: #ececec; }
.radio { width: 11px; height: 11px; border-radius: 50%; border: 1px solid #999; background: #fff; margin-right: 10px; position: relative; }
.radio.on::after { content: ""; position: absolute; left: 2px; top: 2px; width: 5px; height: 5px; border-radius: 50%; background: #111; }
.rl { margin-right: 9px; }
.xl { margin-left: 7px; font-size: 12.500px; width: 27px; }
.yl { margin-left: 14px; font-size: 12.500px; width: 26px; }
.spin { width: 78px; height: 22px; background: #f7f7f7; border: 1px solid #888; display: flex; align-items: center; justify-content: flex-end; color: #777; padding-right: 2px; }
.arrows { display: flex; flex-direction: column; font-size: 7px; line-height: 9px; margin-left: 9px; width: 8px; color: #555; }
.mm { margin-left: 5px; font-size: 12.500px; }
.poly-cv { width: 751px; height: 468px; background: #000; }
.g-lines { fill: none; stroke: #0a800a; }
.s-lines { fill: none; stroke: #aaa; }
.w-lines { fill: none; stroke: #fff; }
.r-poly { fill: none; stroke: #f00; stroke-width: 3; }
.r-x { fill: none; stroke: #f00; stroke-width: 3; }
.t-gr { font: 700 14.500px "Liberation Mono", monospace; fill: #00f000; }
.t-dim { font: 12px "Liberation Mono", monospace; fill: #bbb; }
.poly-dyn { height: 28px; flex: none; border-bottom: 1px solid #a4a4a4; padding: 2px 0 0 2px; }
.dyn { width: 57px; height: 23px; background: #dcebf7; border: 1px solid #1a7fd0; line-height: 20px; text-align: center; }
.poly-btns { height: 42px; flex: none; display: flex; padding-top: 9px; }
.btn { height: 23px; background: #e1e1e1; border: 1px solid #adadad; line-height: 20px; text-align: center; white-space: nowrap; }
.b-cad1 { margin-left: 313px; width: 105px; }
.b-cad2 { margin-left: 23px; width: 113px; }
.b-ok { margin-left: 25px; width: 72px; }
.b-cc { margin-left: 15px; width: 72px; }
.poly-status { height: 20px; flex: none; display: flex; gap: 2px; background: #e6e6e6; }
.ps { height: 20px; line-height: 19px; background: #fafafa; border: 1px solid #e2e2e2; padding-left: 1px; white-space: nowrap; flex: none; }
.ps1 { width: 148px; } .ps2 { width: 148px; } .ps3 { flex: 1; margin-left: 1px; background: linear-gradient(#fff, #f0f0f0); }

/* dialog */
.dlg { position: absolute; left: 82px; top: 377px; width: 411px; height: 223px; display: flex; flex-direction: column; border: 1px solid #3a8fd8; background: #f0f0f0; }
.dlg-title { height: 25px; flex: none; background: #fff; display: flex; align-items: center; justify-content: space-between; padding: 0 9px 0 3px; font-size: 12.500px; }
.dlg-x { width: 11px; height: 11px; }
.dlg-body { flex: 1; padding: 14px 13px 0; }
.fs { margin: 8px 0 15px; padding: 0 8px 0 6px; border: 2px solid #e4e4e4; height: 58px; position: relative; display: block; }
.fs legend { padding: 0 4px 0 0; margin: 0; line-height: 16px; height: 16px; position: relative; top: -7px; float: none; white-space: nowrap; }
.ta-box { height: 41px; background: #fff; border: 1px solid #7a7a7a; padding: 1px 2px; line-height: 14px; margin-top: -6px; }
.ta-box.focus { border-color: #5a83a8; }
.seltext { background: #0a6dd0; color: #fff; display: inline-block; }
.dlg-btns { display: flex; gap: 15px; padding-left: 223px; margin-top: -3px; }
.d-btn { width: 72px; }

/* floating chrome */
.sogou { position: absolute; left: 737px; top: 14px; width: 206px; height: 24px; background: #eef5fb; border: 1px solid #b0c8dc; display: flex; align-items: center; padding-left: 31px; gap: 6px; color: #1a78c4; }
.sg-s { position: absolute; left: -3px; top: -3px; width: 27px; height: 27px; border-radius: 6px; background: linear-gradient(135deg, #f2481c, #ef7f1a); color: #fff; font-weight: 700; font-size: 22px; line-height: 27px; text-align: center; transform: rotate(-12deg); }
.sg-a { font-size: 18px; width: 14px; line-height: 20px; }
.sg { width: 16px; height: 16px; }
.badge70 { position: absolute; left: 1009px; top: -26px; width: 44px; height: 44px; border-radius: 50%; background: #3fae3f; border: 2px solid #e4f0e4; box-shadow: 0 1px 3px rgba(0,0,0,.5); color: #fff; font-weight: 700; font-size: 11px; text-align: center; padding-top: 26px; line-height: 13px; }
.netw { position: absolute; left: 1075px; top: 82px; width: 120px; height: 51px; border-radius: 26px; background: #fff; box-shadow: 1px 2px 5px rgba(0,0,0,.35); display: flex; align-items: center; padding-left: 5px; }
.netw-c { width: 40px; height: 40px; border-radius: 50%; background: #27c96f; display: flex; align-items: center; justify-content: center; color: #fff; }
.netw-w { width: 28px; height: 28px; }
.netw-t { margin-left: 9px; display: flex; flex-direction: column; gap: 4px; color: #777; font-size: 11px; }
.netw-r { display: flex; align-items: center; gap: 6px; height: 16px; }
.netw-i { width: 10px; height: 14px; }
.ink { position: absolute; left: 0; top: 0; width: 1366px; height: 768px; pointer-events: none; }
```
